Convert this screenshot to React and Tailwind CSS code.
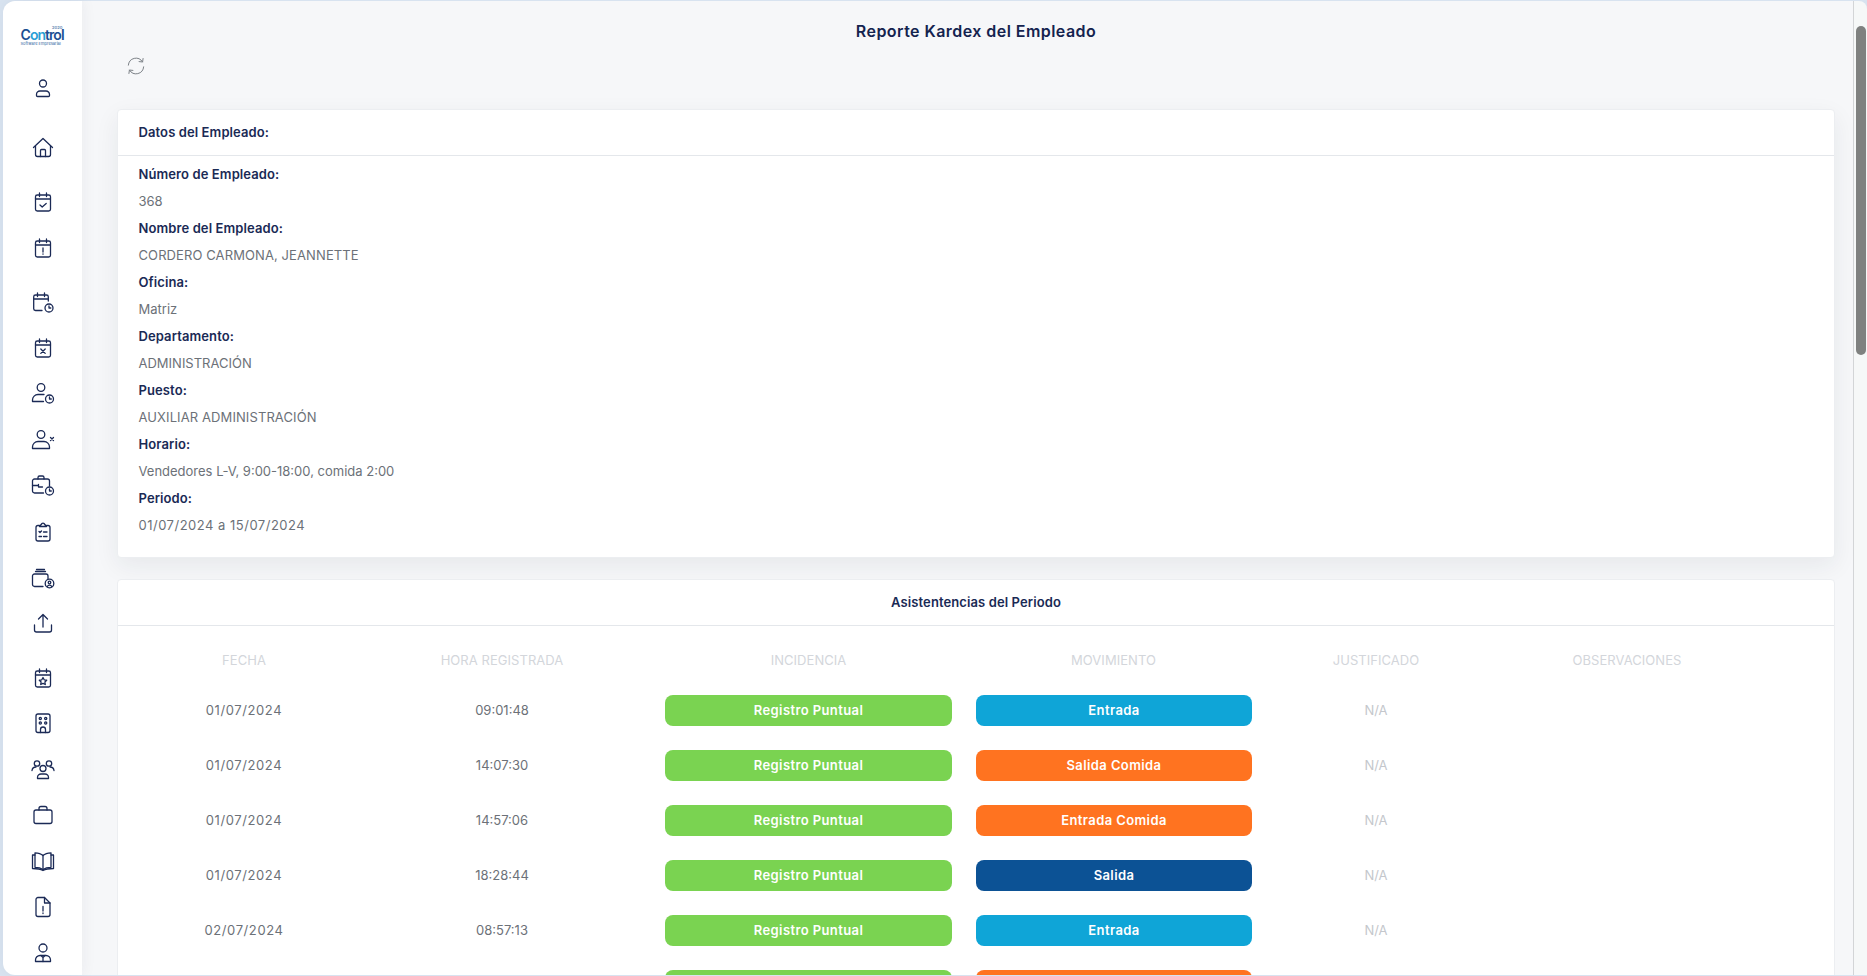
const NAVY = '#1b2a56'

// sidebar icons, each drawn on a 24x24 box
const Cal = ({ children }) => (
  <>
    <rect x="4.5" y="5" width="15" height="16" rx="1.8" />
    <path d="M4.5 9h15M8.500 3v3.500M15.500 3v3.500" />
    {children}
  </>
)

const CalWide = ({ children }) => (
  <>
    <path d="M11 20.500H4.500A1.800 1.800 0 0 1 2.700 18.700V6.800A1.800 1.800 0 0 1 4.500 5h11A1.800 1.800 0 0 1 17.300 6.800V11" />
    <path d="M2.700 9h14.600M6.500 3v3.500M13.500 3v3.500" />
    {children}
  </>
)

const Clock = ({ cx = 18, cy = 18 }) => (
  <>
    <circle cx={cx} cy={cy} r="4" />
    <path d={`M${cx} ${cy - 2}v2h1.800`} />
  </>
)

const SIDE_ICONS = [
  {
    id: 'user',
    top: 'mt-[0px]',
    icon: (
      <>
        <circle cx="12" cy="7.500" r="3.500" />
        <path d="M5.500 19.500v-1a3.500 3.500 0 0 1 3.500-3.500h6a3.500 3.500 0 0 1 3.500 3.500v1a1 1 0 0 1-1 1H6.500a1 1 0 0 1-1-1z" />
      </>
    ),
  },
  {
    id: 'home',
    top: 'mt-[36px]',
    icon: (
      <>
        <path d="M2.500 11.500L12 2.500l9.500 9" />
        <path d="M4.500 10v8.500a2 2 0 0 0 2 2h11a2 2 0 0 0 2-2V10" />
        <path d="M9.500 20.500v-6a1 1 0 0 1 1-1h3a1 1 0 0 1 1 1v6" />
      </>
    ),
  },
  {
    id: 'cal-check',
    top: 'mt-[30px]',
    icon: (
      <Cal>
        <path d="M9 15l2.200 2 4-3.500" />
      </Cal>
    ),
  },
  {
    id: 'cal-alert',
    top: 'mt-[22px]',
    icon: (
      <Cal>
        <path d="M12 12v4M12 17.800v.4" />
      </Cal>
    ),
  },
  {
    id: 'cal-clock',
    top: 'mt-[30px]',
    icon: (
      <CalWide>
        <Clock />
      </CalWide>
    ),
  },
  {
    id: 'cal-x',
    top: 'mt-[22px]',
    icon: (
      <Cal>
        <path d="M9.800 13l4.400 4.400M14.200 13l-4.400 4.400" />
      </Cal>
    ),
  },
  {
    id: 'user-clock',
    top: 'mt-[21px]',
    icon: (
      <>
        <circle cx="10" cy="6.500" r="3.800" />
        <path d="M12.500 20.500H1.500V19a5.500 5.500 0 0 1 5.500-5.500h6" />
        <Clock cx={18.500} cy={18} />
      </>
    ),
  },
  {
    id: 'user-x',
    top: 'mt-[23px]',
    icon: (
      <>
        <circle cx="10" cy="6.500" r="3.800" />
        <path d="M1.500 20.500V19A5.500 5.500 0 0 1 7 13.500h6a5.500 5.500 0 0 1 5.500 5.500v1.500z" />
        <path d="M19.500 9.500l3 3M22.500 9.500l-3 3" />
      </>
    ),
  },
  {
    id: 'case-clock',
    top: 'mt-[21px]',
    icon: (
      <>
        <path d="M12.500 20H3.500a2 2 0 0 1-2-2V8a2 2 0 0 1 2-2h13a2 2 0 0 1 2 2v5" />
        <path d="M7 6V4.500A1.500 1.500 0 0 1 8.500 3h3A1.500 1.500 0 0 1 13 4.500V6M1.500 12.500h6M7.500 11.500v2.500h4" />
        <Clock cx={18.500} cy={18} />
      </>
    ),
  },
  {
    id: 'clipboard',
    top: 'mt-[23px]',
    icon: (
      <>
        <path d="M8.500 5.500H7a2 2 0 0 0-2 2V19a2 2 0 0 0 2 2h10a2 2 0 0 0 2-2V7.500a2 2 0 0 0-2-2h-1.500" />
        <path d="M8.500 6.500l2.500-3a1.300 1.300 0 0 1 2 0l2.500 3z" />
        <path d="M8 11.500l1 1 1.500-1.500M12.500 12h3.500M8 16.500h2.500M12.500 16.500h3.500" />
      </>
    ),
  },
  {
    id: 'wallet',
    top: 'mt-[22px]',
    icon: (
      <>
        <path d="M12 20.500H3.500a2 2 0 0 1-2-2V10a2 2 0 0 1 2-2h11.500a2 2 0 0 1 2 2v2.500" />
        <path d="M4.500 5.500h10M5.500 3.500h8" />
        <circle cx="18.500" cy="17.500" r="4.300" />
        <circle cx="18.500" cy="16.500" r="1.300" />
        <path d="M16.300 20.500a2.400 2.400 0 0 1 4.400 0" />
      </>
    ),
  },
  {
    id: 'upload',
    top: 'mt-[21px]',
    icon: (
      <>
        <path d="M3.500 14v5a2 2 0 0 0 2 2h13a2 2 0 0 0 2-2v-5" />
        <path d="M12 16V3.500M7.500 8L12 3.500 16.500 8" />
      </>
    ),
  },
  {
    id: 'cal-star',
    top: 'mt-[31px]',
    icon: (
      <Cal>
        <path d="M12 11.500l1.200 2.300 2.500.4-1.800 1.800.4 2.500-2.300-1.200-2.300 1.200.4-2.500-1.800-1.800 2.500-.4z" />
      </Cal>
    ),
  },
  {
    id: 'building',
    top: 'mt-[21px]',
    icon: (
      <>
        <rect x="5" y="3" width="14" height="18.500" rx="2" />
        <circle cx="9.300" cy="7.500" r="1.100" />
        <circle cx="14.700" cy="7.500" r="1.100" />
        <circle cx="9.300" cy="12" r="1.100" />
        <circle cx="14.700" cy="12" r="1.100" />
        <path d="M9.500 21.500v-3a2.500 2.500 0 0 1 5 0v3" />
      </>
    ),
  },
  {
    id: 'users',
    top: 'mt-[23px]',
    icon: (
      <>
        <circle cx="6" cy="5.500" r="2.700" />
        <circle cx="18" cy="5.500" r="2.700" />
        <circle cx="12" cy="10.500" r="3" />
        <path d="M1 12.500a4 4 0 0 1 4-3.500M23 12.500a4 4 0 0 0-4-3.500" />
        <path d="M6.500 20.500v-1a3.500 3.500 0 0 1 3.500-3.500h4a3.500 3.500 0 0 1 3.500 3.500v1z" />
      </>
    ),
  },
  {
    id: 'case',
    top: 'mt-[21px]',
    icon: (
      <>
        <rect x="3" y="7" width="18" height="13.500" rx="2" />
        <path d="M8 7V5.500a2 2 0 0 1 2-2h4a2 2 0 0 1 2 2V7" />
      </>
    ),
  },
  {
    id: 'book',
    top: 'mt-[22px]',
    icon: (
      <>
        <path d="M12 6.500C10 4.500 7.500 3.800 4 3.800v14.500c3.500 0 6 .7 8 2.200 2-1.500 4.500-2.200 8-2.200V3.800c-3.500 0-6 .7-8 2.700z" />
        <path d="M12 6.500v14M4 6H1.500v13.500c4 0 8 .5 10.500 2 2.500-1.500 6.500-2 10.500-2V6H20" />
      </>
    ),
  },
  {
    id: 'file-alert',
    top: 'mt-[22px]',
    icon: (
      <>
        <path d="M13.500 2.500H7a2 2 0 0 0-2 2v15a2 2 0 0 0 2 2h10a2 2 0 0 0 2-2V8z" />
        <path d="M13.500 2.500V8H19M12 11.500v4.500M12 18v.5" />
      </>
    ),
  },
  {
    id: 'worker',
    top: 'mt-[22px]',
    icon: (
      <>
        <circle cx="12" cy="7" r="4" />
        <path d="M4.500 20.500v-1.500a4.500 4.500 0 0 1 4.500-4.500h6a4.500 4.500 0 0 1 4.500 4.500v1.500z" />
        <path d="M10 14.500l2 2 2-2M12 16.500v4" />
      </>
    ),
  },
]

const DATOS = [
  ['Número de Empleado:', '368', ''],
  ['Nombre del Empleado:', 'CORDERO CARMONA, JEANNETTE', 'tracking-[0.1px]'],
  ['Oficina:', 'Matriz', ''],
  ['Departamento:', 'ADMINISTRACIÓN', ''],
  ['Puesto:', 'AUXILIAR ADMINISTRACIÓN', 'tracking-[0.1px]'],
  ['Horario:', 'Vendedores L-V, 9:00-18:00, comida 2:00', ''],
  ['Periodo:', '01/07/2024 a 15/07/2024', 'tracking-[0.5px]'],
]

const MOV = {
  Entrada: 'bg-[#0fa5d7]',
  'Salida Comida': 'bg-[#ff7320]',
  'Entrada Comida': 'bg-[#ff7320]',
  Salida: 'bg-[#0c5295]',
}

const ROWS = [
  ['01/07/2024', '09:01:48', 'Entrada'],
  ['01/07/2024', '14:07:30', 'Salida Comida'],
  ['01/07/2024', '14:57:06', 'Entrada Comida'],
  ['01/07/2024', '18:28:44', 'Salida'],
  ['02/07/2024', '08:57:13', 'Entrada'],
  ['02/07/2024', '14:02:11', 'Salida Comida'],
]

const COLS = ['FECHA', 'HORA REGISTRADA', 'INCIDENCIA', 'MOVIMIENTO', 'JUSTIFICADO', 'OBSERVACIONES']

function Logo() {
  return (
    <div className="relative w-[44px] h-[20px] shrink-0">
      <span className="absolute left-0 top-[3px] text-[14px] leading-[12px] font-semibold tracking-[-0.95px] text-[#1c4f94]">
        C<span className="text-[#2a9fd6]">on</span>trol
      </span>
      <span className="absolute right-[2px] top-0 text-[4px] leading-[3px] font-bold text-[#6f8fb8]">2020</span>
      <span className="absolute left-0 top-[16px] text-[4px] leading-[4px] whitespace-nowrap text-[#2e5f9e]">
        Software Empresarial
      </span>
    </div>
  )
}

function Sidebar() {
  return (
    <aside className="relative z-10 w-[79px] shrink-0 bg-white rounded-tl-xl rounded-bl-xl shadow-[2px_0_14px_rgba(30,40,60,0.05)] flex flex-col items-center pt-[25px] overflow-hidden">
      <Logo />
      <div className="mt-[30px] flex flex-col items-center">
        {SIDE_ICONS.map((item) => (
          <svg
            key={item.id}
            viewBox="0 0 24 24"
            fill="none"
            stroke={NAVY}
            strokeWidth="1.300"
            strokeLinecap="round"
            strokeLinejoin="round"
            className={`w-[24px] h-[24px] shrink-0 ${item.top}`}
          >
            {item.icon}
          </svg>
        ))}
      </div>
    </aside>
  )
}

export default function App() {
  return (
    <div className="h-[976px] overflow-hidden bg-[#d8e3f0] py-[1px] pl-[3px] flex font-['Inter',sans-serif] text-[13px]">
      <Sidebar />
      <main className="flex-1 min-w-0 bg-[#f6f7f9] pl-[35px] pr-[18px] overflow-hidden">
        <h1 className="text-center text-[16px] leading-[20px] font-semibold text-[#14234f] mt-[20px] tracking-[0.45px]">
          Reporte Kardex del Empleado
        </h1>
        <div className="mt-[15px] ml-[9px] h-[20px]">
          <svg viewBox="0 0 24 24" fill="none" stroke="#7d8288" strokeWidth="1.200" strokeLinecap="round" strokeLinejoin="round" className="w-[20px] h-[20px]">
            <path d="M2.800 11a9.200 9.200 0 0 1 17-4" />
            <path d="M20.500 3l-.6 4.200-4.200-.5" />
            <path d="M21.200 13a9.200 9.200 0 0 1-17 4" />
            <path d="M3.500 21l.6-4.200 4.200.5" />
          </svg>
        </div>

        <section className="mt-[33px] bg-white rounded border border-[#eceef1] shadow-[0_8px_24px_rgba(30,40,60,0.07)]">
          <h2 className="h-[46px] px-[20px] flex items-center font-semibold tracking-[0.1px] text-[#1a2a55] border-b border-[#e4e7eb]">
            <span className="ml-[0.5px]">Datos del Empleado:</span>
          </h2>
          <div className="pl-[20.5px] pr-[20px] pt-[5px] pb-[18px]">
            {DATOS.map(([label, value, track]) => (
              <div key={label}>
                <div className="h-[27px] flex items-center font-semibold tracking-[0.1px] text-[#1a2a55]">{label}</div>
                <div className={`h-[27px] flex items-center text-[#6c7178] ${track}`}>{value}</div>
              </div>
            ))}
          </div>
        </section>

        <section className="mt-[21px] bg-white rounded-t border border-[#eceef1]">
          <h2 className="h-[46px] flex items-center justify-center font-semibold tracking-[0.1px] text-[#1a2a55] border-b border-[#e4e7eb]">
            Asistentencias del Periodo
          </h2>
          <table className="ml-[20px] mt-[12px] table-fixed w-[1628px] border-collapse">
            <colgroup>
              <col className="w-[212px]" />
              <col className="w-[304px]" />
              <col className="w-[309px]" />
              <col className="w-[301px]" />
              <col className="w-[224px]" />
              <col className="w-[278px]" />
            </colgroup>
            <thead>
              <tr className="h-[45px]">
                {COLS.map((c) => (
                  <th key={c} className="font-normal tracking-[0.05px] text-[#d3d6db] text-center">
                    {c}
                  </th>
                ))}
              </tr>
            </thead>
            <tbody className="text-[#6c7178] text-center">
              {ROWS.map(([fecha, hora, mov], i) => (
                <tr key={i} className="h-[55px]">
                  <td className="tracking-[0.6px]">{fecha}</td>
                  <td>{hora}</td>
                  <td className="px-[11px]">
                    <div className="h-[31px] rounded-lg bg-[#7ad351] text-white font-semibold tracking-[0.4px] flex items-center justify-center">
                      Registro Puntual
                    </div>
                  </td>
                  <td className="pl-[13px] pr-[12px]">
                    <div className={`h-[31px] rounded-lg text-white font-semibold tracking-[0.4px] flex items-center justify-center ${MOV[mov]}`}>
                      {mov}
                    </div>
                  </td>
                  <td className="text-[#c4c7cc]">N/A</td>
                  <td></td>
                </tr>
              ))}
            </tbody>
          </table>
        </section>
      </main>
      <div className="w-[14px] shrink-0 bg-[#f6f8f8] border-l border-[#d3d5d7] rounded-tr-lg pt-[25px] pl-[2px]">
        <div className="w-[10px] h-[329px] rounded-full bg-[#7f8180]"></div>
      </div>
    </div>
  )
}
